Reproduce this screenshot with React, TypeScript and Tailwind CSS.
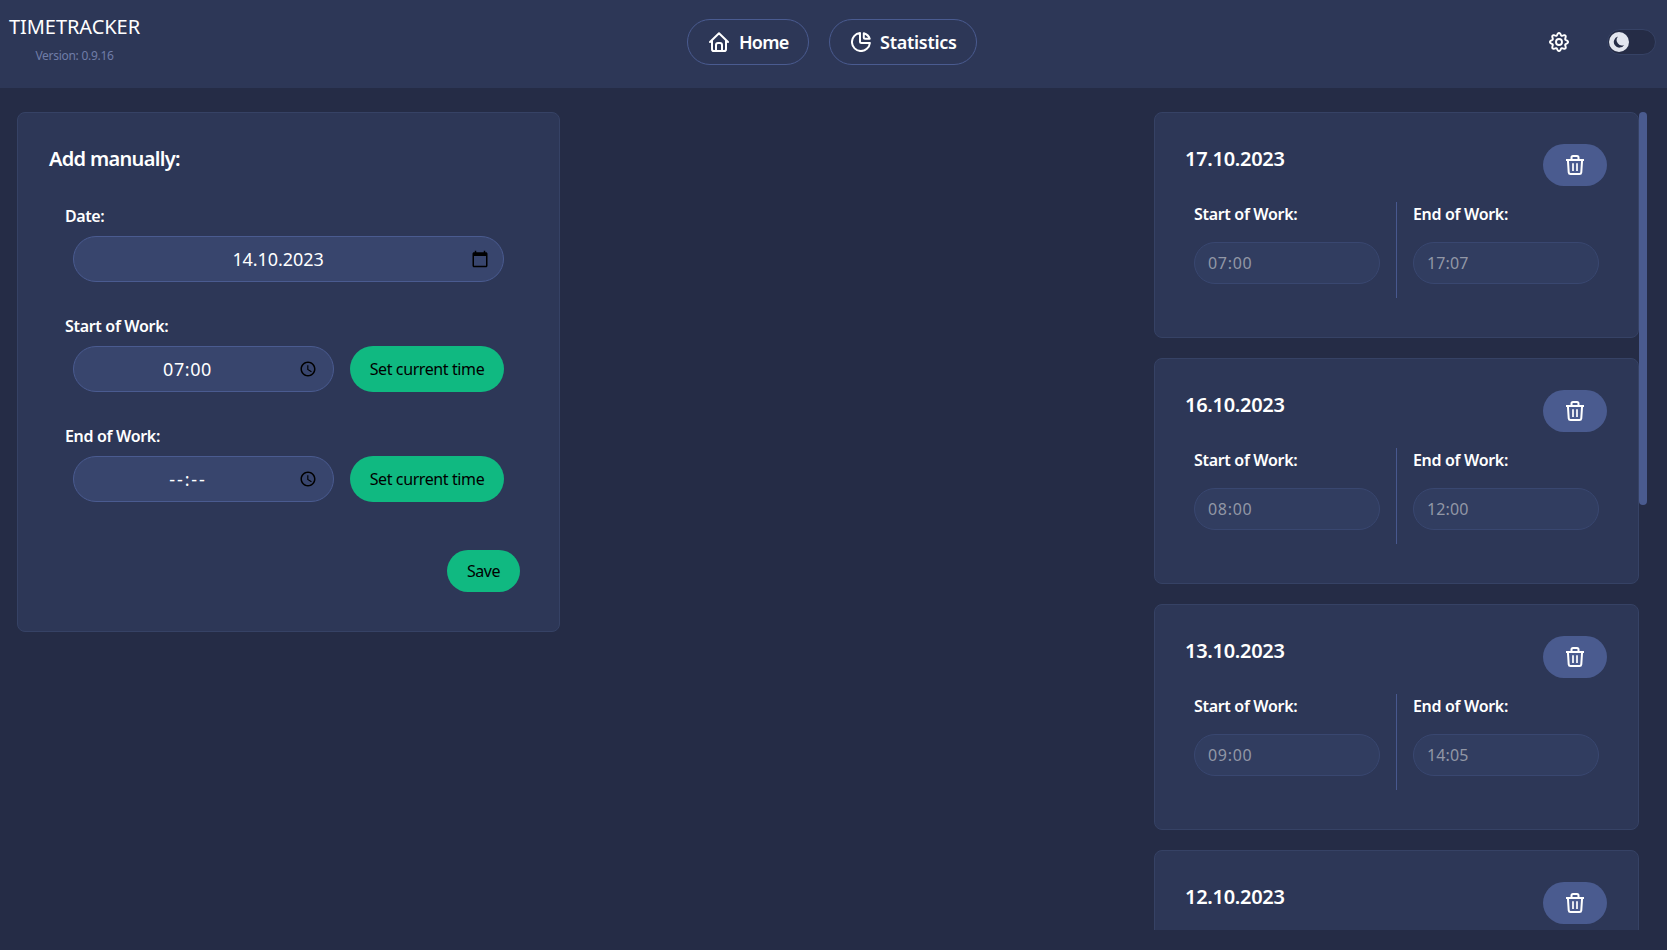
import React from "react";

type Day = { date: string; start?: string; end?: string };

const days: Day[] = [
  { date: "17.10.2023", start: "07:00", end: "17:07" },
  { date: "16.10.2023", start: "08:00", end: "12:00" },
  { date: "13.10.2023", start: "09:00", end: "14:05" },
  { date: "12.10.2023" },
];

function HomeIcon() {
  return (
    <svg width="20" height="20" viewBox="0 0 20 20" fill="none" stroke="currentColor" strokeWidth="2" strokeLinecap="round" strokeLinejoin="round">
      <path d="M1 10 L10 1.2 L19 10 M3 8.5 V17.2 Q3 19 4.8 19 H15.2 Q17 19 17 17.2 V8.5 M7 19 V13 Q7 11 9 11 H11 Q13 11 13 13 V19" />
    </svg>
  );
}

function PieIcon() {
  return (
    <svg width="20" height="20" viewBox="0 0 20 20" fill="none" stroke="currentColor" strokeWidth="2" strokeLinejoin="round">
      <path d="M9 1.1 A9 9 0 1 0 18.9 11 H10.5 Q9 11 9 9.5 Z" />
      <path d="M12.8 1.3 V5.7 Q12.8 6.8 14 6.8 H18.7 Q17.5 2.8 12.8 1.3 Z" />
    </svg>
  );
}

const gearOutline = Array.from({ length: 96 }, (_, i) => {
  const t = (i / 96) * Math.PI * 2;
  const r = 7.9 + 1.2 * Math.cos(8 * t);
  return `${(10 + r * Math.sin(t)).toFixed(2)},${(10 - r * Math.cos(t)).toFixed(2)}`;
}).join(" ");

function GearIcon() {
  return (
    <svg width="20" height="20" viewBox="0 0 20 20" fill="none" stroke="currentColor" strokeWidth="1.9" strokeLinejoin="round">
      <polygon points={gearOutline} />
      <circle cx="10" cy="10" r="3" />
    </svg>
  );
}

function TrashIcon() {
  return (
    <svg width="20" height="20" viewBox="0 0 20 20" fill="none" stroke="currentColor" strokeWidth="2" strokeLinejoin="round">
      <path d="M1 5 H19 M6.5 4.5 V2.5 Q6.5 1 8 1 H12 Q13.5 1 13.5 2.5 V4.5 M2.9 5 L3.7 17.3 Q3.9 19 5.5 19 H14.5 Q16.1 19 16.3 17.3 L17.1 5" />
      <path strokeWidth="1.7" d="M8 8.2 V16 M12 8.2 V16" />
    </svg>
  );
}

function CalendarIcon() {
  return (
    <svg width="18" height="18" viewBox="0 0 24 24" fill="#000">
      <path d="M20 3h-1V1h-2v2H7V1H5v2H4c-1.1 0-2 .9-2 2v16c0 1.1.9 2 2 2h16c1.1 0 2-.9 2-2V5c0-1.1-.9-2-2-2zm0 18H4V8h16v13z" />
    </svg>
  );
}

function ClockIcon() {
  return (
    <svg width="18" height="18" viewBox="0 0 24 24" fill="#000">
      <path d="M12 2C6.5 2 2 6.5 2 12s4.5 10 10 10 10-4.5 10-10S17.5 2 12 2zm0 18c-4.42 0-8-3.58-8-8s3.58-8 8-8 8 3.58 8 8-3.58 8-8 8zm.5-13H11v6l5.2 3.2.8-1.3-4.5-2.7V7z" />
    </svg>
  );
}

function Field({ value, icon, className, textClass }: { value: string; icon: React.ReactNode; className: string; textClass: string }) {
  return (
    <div className={`flex h-[46px] items-center rounded-[23px] border border-[#4a5b90] bg-[#38456d] text-lg text-white ${className}`}>
      <span className={`flex-1 text-center ${textClass}`}>{value}</span>
      {icon}
    </div>
  );
}

function TimeSlot({ label, value }: { label: string; value: string }) {
  return (
    <>
      <div className="leading-6 font-semibold tracking-[-0.32px]">{label}</div>
      <div className={`mt-4 flex h-[42px] items-center rounded-[21px] border border-[#394770] bg-[#313d60] px-[13px] text-[#9297a6] ${value.startsWith("0") ? "tracking-[0.7px]" : "tracking-[0.1px]"}`}>
        {value}
      </div>
    </>
  );
}

function DayCard({ date, start, end }: Day) {
  return (
    <section className="h-[226px] shrink-0 rounded-lg border border-[#364265] bg-[#2d3757] px-[31px] pt-[31px]">
      <div className="flex h-[42px] justify-between">
        <h2 className="-ml-px text-xl leading-[30px] font-semibold tracking-[-0.3px]">{date}</h2>
        <button className="flex h-[42px] w-16 items-center justify-center rounded-[21px] bg-[#4a5b8f]">
          <TrashIcon />
        </button>
      </div>
      {start && end && (
        <div className="mt-4 flex h-24">
          <div className="w-[211px] border-r border-[#48588f] pr-4 pl-2">
            <TimeSlot label="Start of Work:" value={start} />
          </div>
          <div className="flex-1 pr-2 pl-4">
            <TimeSlot label="End of Work:" value={end} />
          </div>
        </div>
      )}
    </section>
  );
}

export default function App() {
  return (
    <div className="flex h-[950px] w-full flex-col overflow-hidden bg-[#252c46] font-['Noto_Sans',sans-serif] text-base text-white">
      <header className="flex h-[88px] shrink-0 justify-between bg-[#2d3757]">
        <div className="flex w-[149px] flex-col items-center pt-3">
          <div className="text-xl leading-[30px] tracking-[-0.05px]">TIMETRACKER</div>
          <div className="mt-[5px] text-xs leading-[18px] tracking-[-0.28px] text-[#707da8]">Version: 0.9.16</div>
        </div>
        <nav className="flex gap-5 pt-[19px] pr-[3px]">
          <a className="flex h-[46px] w-[122px] items-center gap-2.5 rounded-[23px] border border-[#4a5b90] pl-[21px] text-lg font-semibold tracking-[-0.75px]">
            <HomeIcon />
            Home
          </a>
          <a className="flex h-[46px] w-[148px] items-center gap-[9px] rounded-[23px] border border-[#4a5b90] pl-[21px] text-lg font-semibold tracking-[-0.27px]">
            <PieIcon />
            Statistics
          </a>
        </nav>
        <div className="flex w-[149px] justify-end gap-[38px] pt-[29px] pr-[11px]">
          <div className="pt-[3px]">
            <GearIcon />
          </div>
          <div className="flex h-[26px] w-[49px] items-center rounded-full border border-[#364265] bg-[#252c46] pl-px">
            <div className="flex size-5 items-center justify-center rounded-full bg-[#e2e5ee]">
              <svg width="12" height="12" viewBox="0 0 12 12" fill="#252c46">
                <path d="M5 0.6 A5.6 5.6 0 1 0 11.2 8.9 A5.3 5.3 0 0 1 5 0.6 Z" />
              </svg>
            </div>
          </div>
        </div>
      </header>

      <main className="flex min-h-0 flex-1 justify-between pt-6 pr-5 pb-5 pl-[17px]">
        <section className="h-[520px] w-[543px] rounded-lg border border-[#364265] bg-[#2d3757] px-[31px] pt-[31px]">
          <h2 className="text-xl leading-[30px] font-semibold tracking-[-0.68px]">Add manually:</h2>
          <div className="mt-[30px] flex flex-col gap-8 pr-6 pl-4">
            <div>
              <div className="mb-2 leading-6 font-semibold tracking-[-0.4px]">Date:</div>
              <Field value="14.10.2023" icon={<CalendarIcon />} className="ml-2 pr-[14px] pl-[11px]" textClass="tracking-[-0.08px]" />
            </div>
            <div>
              <div className="mb-2 leading-6 font-semibold tracking-[-0.32px]">Start of Work:</div>
              <div className="ml-2 flex gap-4">
                <Field value="07:00" icon={<ClockIcon />} className="flex-1 pr-4 pl-[2px]" textClass="tracking-[0.6px]" />
                <button className="h-[46px] w-[154px] rounded-[23px] bg-[#10b981] tracking-[-0.4px] text-black">Set current time</button>
              </div>
            </div>
            <div>
              <div className="mb-2 leading-6 font-semibold tracking-[-0.32px]">End of Work:</div>
              <div className="ml-2 flex gap-4">
                <Field value="--:--" icon={<ClockIcon />} className="flex-1 pr-4 pl-[3px]" textClass="tracking-[1.9px]" />
                <button className="h-[46px] w-[154px] rounded-[23px] bg-[#10b981] tracking-[-0.4px] text-black">Set current time</button>
              </div>
            </div>
          </div>
          <div className="mt-12 flex justify-end pr-2">
            <button className="h-[42px] w-[73px] rounded-[21px] bg-[#10b981] tracking-[-0.5px] text-black">Save</button>
          </div>
        </section>

        <div className="flex">
          <div className="flex h-[818px] w-[485px] flex-col gap-5 overflow-hidden">
            {days.map((d) => (
              <DayCard key={d.date} {...d} />
            ))}
          </div>
          <div className="h-[393px] w-2 rounded bg-[#4a5b8f]" />
        </div>
      </main>
    </div>
  );
}
